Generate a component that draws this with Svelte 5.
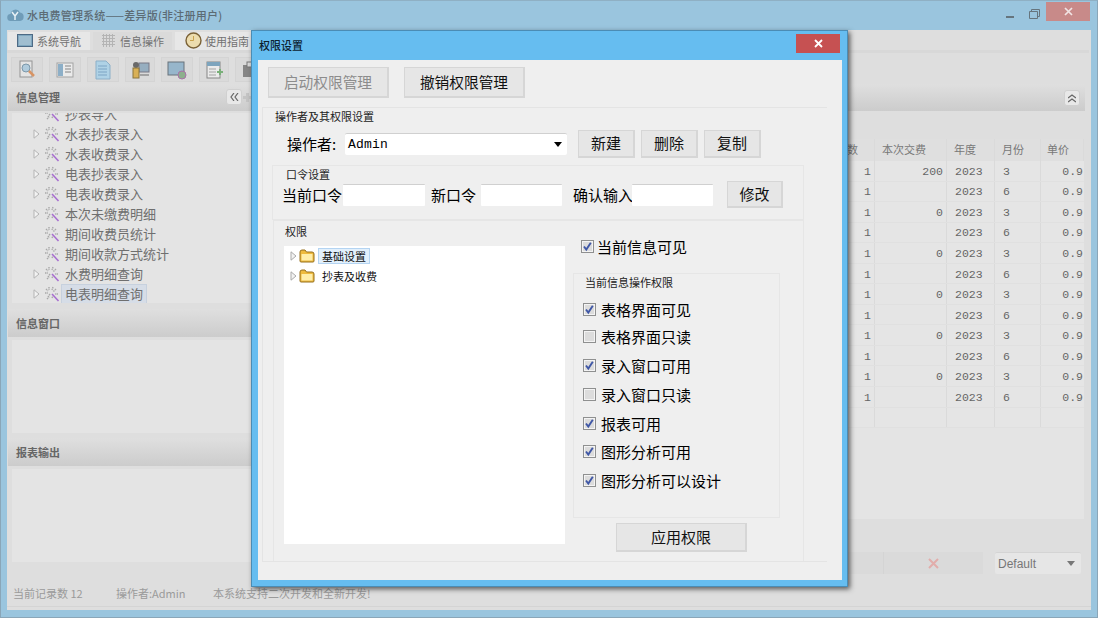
<script>
  const treeRows = [
    { t: '水表抄表录入', a: true }, { t: '水表收费录入', a: true }, { t: '电表抄表录入', a: true },
    { t: '电表收费录入', a: true }, { t: '本次未缴费明细', a: true }, { t: '期间收费员统计', a: false },
    { t: '期间收款方式统计', a: false }, { t: '水费明细查询', a: true }, { t: '电表明细查询', a: true, sel: true }
  ];
  const rows = [];
  for (let i = 0; i < 12; i++) {
    const odd = i % 2 === 0;
    rows.push({ n: '1', pay: i === 0 ? '200' : odd ? '0' : '', y: '2023', m: odd ? '3' : '6', p: '0.9' });
  }
  rows.push({ n: '', pay: '', y: '', m: '', p: '' });
  const perms = [
    ['表格界面可见', true, 10], ['表格界面只读', false, 8], ['录入窗口可用', true, 10], ['录入窗口只读', false, 10],
    ['报表可用', true, 10], ['图形分析可用', true, 9], ['图形分析可以设计', true, 10]
  ];
  const tools = [32, 32, 32, 30, 32, 30, 32];
</script>

{#snippet check(on)}
  <svg class="cb" width="13" height="13" viewBox="0 0 13 13">
    <rect x=".5" y=".5" width="12" height="12" fill="#f4f4f4" stroke="#8f9090" />
    <rect x="2" y="2" width="9" height="9" fill="#dcdcdc" />
    {#if on}<path d="M3 6.500 5.300 9.500 9.800 2.800" fill="none" stroke="#3f57a6" stroke-width="1.900" />{/if}
  </svg>
{/snippet}

{#snippet tri(c)}
  <svg class="tri" width="7" height="10" viewBox="0 0 7 10"><path d="M1 .8 6 5 1 9.200Z" fill="#f2f2f2" stroke={c} /></svg>
{/snippet}

{#snippet wand()}
  <svg class="wand" width="16" height="16" viewBox="0 0 16 16">
    <path d="M14.500 15 8 8" stroke="#a86fd0" stroke-width="1.600" />
    <path d="M5 1v3M2 3l2 2M1 7h3M6 8 4 11M3 13l2-2M9 1 8 4M12 3 9 6M14 8h-3M8 12l1-2" stroke="#a8a8a8" stroke-width="1.400" stroke-dasharray="1.500 .7" fill="none" />
  </svg>
{/snippet}

{#snippet folder()}
  <svg class="folder" width="16" height="14" viewBox="0 0 16 14">
    <path d="M1 12V3q0-2 2-2h3l1.500 2H13q2 0 2 2v7q0 1-1 1H2q-1 0-1-1Z" fill="#eebb3f" stroke="#96701f" />
    <rect x="2.500" y="5" width="11" height="6.500" fill="#ffeeaa" />
  </svg>
{/snippet}

<div class="win">
  <header class="titlebar">
    <svg class="logo" width="17" height="14" viewBox="0 0 17 14">
      <path d="M4 13a3.500 3.500 0 0 1-.5-7A5 5 0 0 1 13 4.500 4.300 4.300 0 0 1 13 13Z" fill="#6f9cb8" />
      <path d="M5 4l3 4 3-4M8 8v4" stroke="#e8f1f6" stroke-width="1.500" fill="none" />
    </svg>
    <span class="wtitle">水电费管理系统——差异版(非注册用户)</span>
    <span class="fill"></span>
    <span class="min"></span>
    <svg class="rest" width="11" height="10" viewBox="0 0 11 10"><path d="M.5 2.500h8v7h-8zM2.500 2.500v-2h8v7h-2" fill="none" stroke="#66757e" /></svg>
    <span class="close">
      <svg width="9" height="9" viewBox="0 0 9 9"><path d="M1 1l7 7M8 1 1 8" stroke="#f1e4e4" stroke-width="1.700" /></svg>
    </span>
  </header>

  <div class="content">
    <nav class="tabs">
      <div class="tab t1">
        <svg width="16" height="13" viewBox="0 0 16 13"><rect x=".5" y=".5" width="15" height="12" fill="#7fa7bf" stroke="#4d6a85" /><rect x="2" y="2" width="12" height="9" fill="#a0bed0" /></svg>
        系统导航
      </div>
      <div class="tab t2">
        <svg width="15" height="15" viewBox="0 0 15 15"><path d="M2.500 1v13M5.500 1v13M8.500 1v13M11.500 1v13M1 2.500h13M1 5.500h13M1 8.500h13M1 11.500h13" stroke="#b4b4b4" /></svg>
        信息操作
      </div>
      <div class="tab t3">
        <svg width="17" height="17" viewBox="0 0 17 17"><circle cx="8.500" cy="8.500" r="7.500" fill="#ecdcae" stroke="#7a6136" stroke-width="1.400" /><path d="M8.500 4v4.500H5" stroke="#c9a24d" fill="none" /></svg>
        使用指南
      </div>
    </nav>
    <div class="strip"></div>
    <div class="toolbar">
      {#each tools as w, i}
        <div class="tool" style="width:{w}px">
          <svg width="20" height="20" viewBox="0 0 20 20">
            {#if i === 0}
              <rect x="3" y="1" width="12" height="16" fill="#e6e6e6" stroke="#888" /><circle cx="9" cy="8" r="4" fill="#a8c8dc" stroke="#6b8ba0" /><path d="M12 11l5 5" stroke="#d8884f" stroke-width="2.500" />
            {:else if i === 1}
              <rect x="2" y="3" width="16" height="14" fill="#eee" stroke="#999" /><rect x="3" y="4" width="5" height="12" fill="#7fa7c4" /><path d="M10 6h6M10 9h6M10 12h6" stroke="#777" />
            {:else if i === 2}
              <path d="M3 1h10l4 4v14H3Z" fill="#a7d0e8" stroke="#7fa7c4" /><path d="M5 6h9M5 9h9M5 12h9M5 15h9" stroke="#6c9cc0" />
            {:else if i === 3}
              <rect x="9" y="3" width="10" height="9" fill="#8aa6bb" stroke="#667" /><circle cx="6" cy="5" r="3" fill="#555" /><rect x="3" y="8" width="6" height="10" fill="#d9a93e" stroke="#7d6320" /><path d="M10 15h9" stroke="#999" stroke-width="2" />
            {:else if i === 4}
              <rect x="1" y="2" width="16" height="13" fill="#8bb0c8" stroke="#55606a" /><circle cx="15" cy="15" r="4" fill="#80a880" stroke="#a060a0" />
            {:else if i === 5}
              <rect x="3" y="2" width="13" height="16" fill="#eee" stroke="#777" /><rect x="3" y="2" width="13" height="4" fill="#6d9bb8" /><path d="M5 9h7M5 12h7M5 15h7" stroke="#999" /><path d="M16 9v6M13 12h6" stroke="#68a868" stroke-width="2" />
            {:else}
              <rect x="2" y="5" width="16" height="12" fill="#777" /><rect x="6" y="2" width="8" height="5" fill="#ddd" stroke="#666" />
            {/if}
          </svg>
        </div>
      {/each}
    </div>

    <div class="main">
      <aside class="side">
        <div class="phead first">
          <span>信息管理</span>
          <span class="collapse">
            <svg width="9" height="8" viewBox="0 0 9 8"><path d="M4 0 1 4l3 4M8 0 5 4l3 4" fill="none" stroke="#666" stroke-width="1.200" /></svg>
          </span>
          <svg class="plus" width="9" height="9" viewBox="0 0 9 9"><path d="M4.500 0v9M0 4.500h9" stroke="#c4c4c4" stroke-width="3" /></svg>
        </div>
        <div class="tree">
          <div class="trow clipped"><span class="notri"></span>{@render wand()}<span>抄表导入</span></div>
          {#each treeRows as r}
            <div class="trow">
              {#if r.a}{@render tri('#b4b4b4')}{:else}<span class="notri"></span>{/if}
              {@render wand()}
              <span class:sel={r.sel}>{r.t}</span>
            </div>
          {/each}
        </div>
        <div class="phead second"><span>信息窗口</span></div>
        <div class="pbody h93"></div>
        <div class="phead third"><span>报表输出</span></div>
        <div class="pbody h94"></div>
      </aside>

      <section class="right">
        <div class="rhead">
          <span class="collapse up">
            <svg width="8" height="9" viewBox="0 0 8 9"><path d="M0 4l4-3 4 3M0 8l4-3 4 3" fill="none" stroke="#666" stroke-width="1.200" /></svg>
          </span>
        </div>
        <div class="panel">
          <div class="grid ghead">
            <div class="c rt hn">数</div><div class="c">本次交费</div><div class="c">年度</div><div class="c">月份</div><div class="c">单价</div>
          </div>
          {#each rows as r}
            <div class="grid grow">
              <div class="c rt n">{r.n}</div><div class="c rt pay">{r.pay}</div><div class="c y">{r.y}</div><div class="c">{r.m}</div><div class="c rt pr">{r.p}</div>
            </div>
          {/each}
        </div>
        <div class="bottom">
          <div class="bar">
            <span class="divider"></span>
            <span class="x">
              <svg width="11" height="11" viewBox="0 0 11 11"><path d="M1 1l9 9M10 1 1 10" stroke="#e2adab" stroke-width="2" /></svg>
            </span>
          </div>
          <div class="dd">
            <span>Default</span>
            <svg width="8" height="5" viewBox="0 0 8 5"><path d="M0 0h8L4 5Z" fill="#777" /></svg>
          </div>
        </div>
      </section>
    </div>

    <footer class="status">
      <span class="s1">当前记录数 12</span>
      <span class="s2">操作者:Admin</span>
      <span class="s3">本系统支持二次开发和全新开发!</span>
    </footer>
  </div>

  <div class="dlg">
    <div class="dhead">
      <span class="dtitle">权限设置</span>
      <span class="dclose">
        <svg width="9" height="9" viewBox="0 0 9 9"><path d="M1 1l7 7M8 1 1 8" stroke="#fff" stroke-width="1.800" /></svg>
      </span>
    </div>
    <div class="dbody">
      <div class="toprow">
        <button class="btn big dis">启动权限管理</button>
        <button class="btn big">撤销权限管理</button>
      </div>
      <div class="g1">
        <div class="legend l1">操作者及其权限设置</div>
        <div class="oprow">
          <span class="oplabel">操作者:</span>
          <div class="select">
            <span class="admin">Admin</span>
            <svg width="8" height="5" viewBox="0 0 8 5"><path d="M0 0h8L4 5Z" fill="#000" /></svg>
          </div>
          <button class="btn sm">新建</button>
          <button class="btn sm">删除</button>
          <button class="btn sm">复制</button>
        </div>
        <div class="g2">
          <div class="legend l2">口令设置</div>
          <div class="pwrow">
            <span class="pw a">当前口令</span><span class="inp w82"></span>
            <span class="pw b">新口令</span><span class="inp w81"></span>
            <span class="pw c2">确认输入</span><span class="inp w81"></span>
            <button class="btn modify">修改</button>
          </div>
        </div>
        <div class="g3">
          <div class="legend l3">权限</div>
          <div class="split">
            <div class="tbox">
              <div class="frow">{@render tri('#aaa')}{@render folder()}<span class="fsel">基础设置</span></div>
              <div class="frow">{@render tri('#aaa')}{@render folder()}<span class="fitem">抄表及收费</span></div>
            </div>
            <div class="rcol">
              <label class="vis">{@render check(true)}<span>当前信息可见</span></label>
              <div class="g4">
                <div class="legend l4">当前信息操作权限</div>
                {#each perms as p}
                  <label class="perm" style="margin-top:{p[2]}px">{@render check(p[1])}<span>{p[0]}</span></label>
                {/each}
              </div>
              <button class="btn apply">应用权限</button>
            </div>
          </div>
        </div>
      </div>
    </div>
  </div>
</div>

<style>
  :global(body) { margin: 0; background: #9ac5de; }
  .win {
    position: relative; width: 1098px; height: 618px; box-sizing: border-box; overflow: hidden;
    background: #9ac5de; border: 1px solid #8aa6b8; border-top-color: #8fb0c4;
    font-family: "Noto Sans CJK SC", "Liberation Sans", sans-serif; font-size: 11px; color: #777;
    display: flex; flex-direction: column;
  }
  button { font-family: inherit; padding: 0 0 2px; }
  .titlebar { height: 29px; flex: none; display: flex; align-items: center; padding: 0 7px 0 6px; box-sizing: border-box; }
  .logo { margin-right: 3px; margin-top: -2px; }
  .wtitle { font-weight: 500; color: #5c6b74; margin-top: -2px; letter-spacing: .22px; }
  .fill { flex: 1; }
  .min { width: 8px; height: 2px; background: #66757e; margin: 2px 15px 0 0; }
  .rest { margin: -4px 6px 0 0; }
  .close { width: 44px; height: 19px; margin: -9px 0 0 0; background: #c88a89; display: flex; align-items: center; justify-content: center; }

  .content { margin: 0 6px; height: 580px; width: 1084px; background: #dedede; display: flex; flex-direction: column; flex: none; }
  .tabs { height: 18px; margin-top: 2px; padding-left: 1px; display: flex; gap: 3px; flex: none; }
  .tab { height: 18px; display: flex; align-items: center; gap: 4px; justify-content: center; color: #727272; box-sizing: border-box; padding-bottom: 1px; }
  .t1 { width: 82px; background: #e7e7e7; }
  .t2 { width: 79px; background: #dadada; }
  .t3 { width: 84px; background: #e7e7e7; gap: 3px; }
  .strip { height: 3px; flex: none; background: #d8d8d8; margin: 0 2px 0 0; }
  .toolbar { height: 31px; flex: none; padding: 4px 0 0 4px; box-sizing: border-box; display: flex; gap: 6px; }
  .tool { height: 25px; box-sizing: border-box; background: #dadada; border: 1px solid #d3d3d3; display: flex; align-items: center; justify-content: center; opacity: .85; }

  .main { height: 496px; flex: none; display: flex; }
  .side { width: 245px; flex: none; padding-left: 1px; box-sizing: border-box; }
  .phead { height: 27px; box-sizing: border-box; background: linear-gradient(#dfdfdf, #cccccc); display: flex; align-items: center; padding-left: 8px; font-weight: 700; color: #666; font-size: 11px; position: relative; }
  .first { padding-bottom: 1px; }
  .second { margin-top: 6px; height: 28px; }
  .third { margin-top: 5px; height: 28px; }
  .collapse { width: 14px; height: 14px; background: #e8e8e8; border: 1px solid #d0d0d0; border-radius: 3px; display: flex; align-items: center; justify-content: center; }
  .first .collapse { position: absolute; left: 218px; top: 5px; }
  .plus { position: absolute; left: 235px; top: 9px; }
  .tree { margin: 2px 0 0 4px; height: 190px; background: #e4e4e4; overflow: hidden; }
  .trow { height: 20px; display: flex; align-items: center; font-size: 13px; color: #6f6f6f; padding-left: 21px; box-sizing: border-box; white-space: nowrap; }
  .trow > span:last-child { margin-top: -2px; }
  .clipped { margin-top: -9px; }
  .tri { flex: none; margin-right: 4px; }
  .notri { width: 11px; flex: none; }
  .wand { flex: none; margin-right: 5px; }
  .trow span.sel { background: #d6dde7; outline: 1px solid #c7d1de; padding: 0 3px; margin-left: -3px; line-height: 18px; margin-top: 0; }
  .pbody { margin: 3px 0 0 4px; background: #e4e4e4; }
  .h93 { height: 93px; }
  .h94 { height: 93px; }

  .right { flex: 1; display: flex; flex-direction: column; }
  .rhead { height: 27px; width: 833px; flex: none; background: linear-gradient(#dfdfdf, #cccccc); position: relative; }
  .up { position: absolute; right: 5px; top: 6px; }
  .panel { margin-top: 28px; width: 832px; height: 380px; flex: none; background: #e4e4e4; }
  .grid { display: grid; grid-template-columns: 1fr 72px 48px 46px 43px; }
  .ghead { height: 22px; background: #dfdfdf; color: #787878; font-size: 11px; }
  .ghead .c { padding-bottom: 2px; }
  .grow { height: 20.55px; font-family: "Liberation Mono", monospace; font-size: 11.5px; color: #666; border-bottom: 1px solid #e0e0e0; box-sizing: border-box; background: #e5e5e5; }
  .grow .c { padding-top: 1px; }
  .c { border-right: 1px solid #dadada; display: flex; align-items: center; box-sizing: border-box; }
  .ghead .c:nth-child(2) { padding-left: 7px; }
  .ghead .c:nth-child(3) { padding-left: 7px; }
  .grow .c:nth-child(3) { padding-left: 8px; }
  .ghead .c:nth-child(4) { padding-left: 7px; }
  .grow .c:nth-child(4) { padding-left: 8px; }
  .ghead .c:nth-child(5) { padding-left: 6px; }
  .rt { justify-content: flex-end; }
  .hn { padding-right: 16px; }
  .n { padding-right: 3px; }
  .pay { padding-right: 3px; }
  .pr { padding-right: 1px; border-right: 0; }
  .bottom { margin-top: 33px; height: 22px; display: flex; gap: 12px; flex: none; }
  .bar { width: 731px; background: #dadada; position: relative; display: flex; align-items: center; justify-content: flex-end; padding-right: 44px; box-sizing: border-box; }
  .divider { position: absolute; left: 631px; top: 0; bottom: 0; width: 1px; background: #d4d4d4; }
  .x { display: flex; }
  .dd { width: 86px; background: #e6e6e6; border-top: 1px solid #d4d4d4; border-radius: 2px; display: flex; align-items: center; justify-content: space-between; padding: 0 6px 0 3px; box-sizing: border-box; font-family: "Liberation Sans", sans-serif; font-size: 12px; color: #777; }

  .status { height: 27px; flex: none; border-bottom: 1px solid #d4d4d4; display: flex; align-items: center; color: #9a9a9a; box-sizing: border-box; }
  .s1 { margin-left: 6px; width: 103px; }
  .s2 { width: 97px; }

  .dlg {
    position: absolute; left: 250px; top: 29px; width: 597px; height: 557px; box-sizing: border-box;
    background: #66bdf0; border: 1px solid #4b8cb4; box-shadow: 2px 2px 5px rgba(40,40,40,.75);
    display: flex; flex-direction: column; color: #000;
  }
  .dhead { height: 29px; flex: none; position: relative; display: flex; align-items: center; padding-left: 7px; }
  .dtitle { font-size: 11px; font-weight: 500; color: #0c2230; margin-top: -2px; }
  .dclose { position: absolute; right: 7px; top: 3px; width: 44px; height: 19px; background: #c65152; display: flex; align-items: center; justify-content: center; }
  .dbody { margin: 0 5px 0 6px; height: 520px; background: #efefef; box-sizing: border-box; padding-top: 7px; flex: none; }
  .toprow { display: flex; gap: 15px; padding-left: 10px; }
  .btn { background: #e6e6e6; border: 1px solid #d6d6d6; border-width: 1px 2px 2px 1px; color: #111; box-sizing: border-box; font-size: 15px; }
  .big { width: 121px; height: 31px; font-size: 14.700px; }
  .dis { color: #8c8c8c; }
  .g1 { margin: 9px 0 0 4px; width: 565px; height: 455px; box-sizing: border-box; border: 1px solid #e4e4e4; border-right: 0; }
  .legend { font-size: 11px; height: 16px; line-height: 16px; color: #222; }
  .l1 { margin-left: 12px; }
  .oprow { display: flex; align-items: center; margin-top: 6px; height: 28px; padding-left: 24px; }
  .oplabel { width: 58px; font-size: 15px; white-space: nowrap; margin-top: -1px; }
  .select { width: 222px; height: 22px; background: #fff; border-top: 1px solid #d0d0d0; box-sizing: border-box; display: flex; align-items: center; justify-content: space-between; padding: 0 5px 0 3px; border-radius: 2px; }
  .admin { font-family: "Liberation Mono", monospace; font-size: 13px; letter-spacing: .2px; }
  .sm { width: 57px; height: 28px; margin-left: 6px; }
  .sm:first-of-type { margin-left: 11px; }
  .g2 { margin: 7px 0 0 9px; width: 532px; height: 55px; border: 1px solid #e6e6e6; box-sizing: border-box; }
  .l2 { margin-left: 13px; }
  .pwrow { display: flex; align-items: center; height: 27px; padding-left: 9px; margin-top: -1px; }
  .pw { font-size: 15px; white-space: nowrap; margin-top: -1px; }
  .a { width: 61px; }
  .b { width: 50px; margin-left: 6px; }
  .c2 { width: 59px; margin-left: 11px; }
  .inp { height: 22px; background: #fff; border-top: 1px solid #d0d0d0; box-sizing: border-box; border-radius: 1px; }
  .w82 { width: 82px; }
  .w81 { width: 81px; }
  .modify { width: 56px; height: 27px; margin-left: 14px; }
  .g3 { margin: 0 0 0 10px; width: 531px; height: 341px; box-sizing: border-box; border: 1px solid #e6e6e6; border-bottom: 0; }
  .l3 { margin-left: 11px; margin-top: 2px; }
  .split { display: flex; margin: 7px 0 0 10px; position: relative; }
  .tbox { width: 281px; height: 298px; background: #fff; flex: none; }
  .frow { height: 20px; display: flex; align-items: center; padding-left: 6px; font-size: 11px; color: #111; white-space: nowrap; }
  .frow .tri { margin-right: 2px; }
  .folder { margin-right: 3px; }
  .fsel { background: #e2f0fc; border: 1px solid #b4d4f2; padding: 0 3px; line-height: 14px; }
  .fitem { margin-left: 4px; margin-top: -1px; }
  .rcol { margin-left: 8px; width: 215px; margin-top: -13px; }
  .vis { display: flex; align-items: center; height: 18px; margin-left: 8px; font-size: 15px; margin-top: 4px; }
  .cb { flex: none; }
  .vis .cb { margin-right: 3px; }
  .g4 { margin-top: 18px; width: 207px; height: 245px; border: 1px solid #e6e6e6; box-sizing: border-box; padding-left: 9px; }
  .l4 { margin-left: 2px; }
  .perm { display: flex; align-items: center; height: 19px; font-size: 15px; }
  .perm .cb { margin-right: 5px; }
  .perm span { margin-top: -1px; }
  .apply { display: block; width: 131px; height: 29px; margin: 5px 0 0 43px; }
</style>
